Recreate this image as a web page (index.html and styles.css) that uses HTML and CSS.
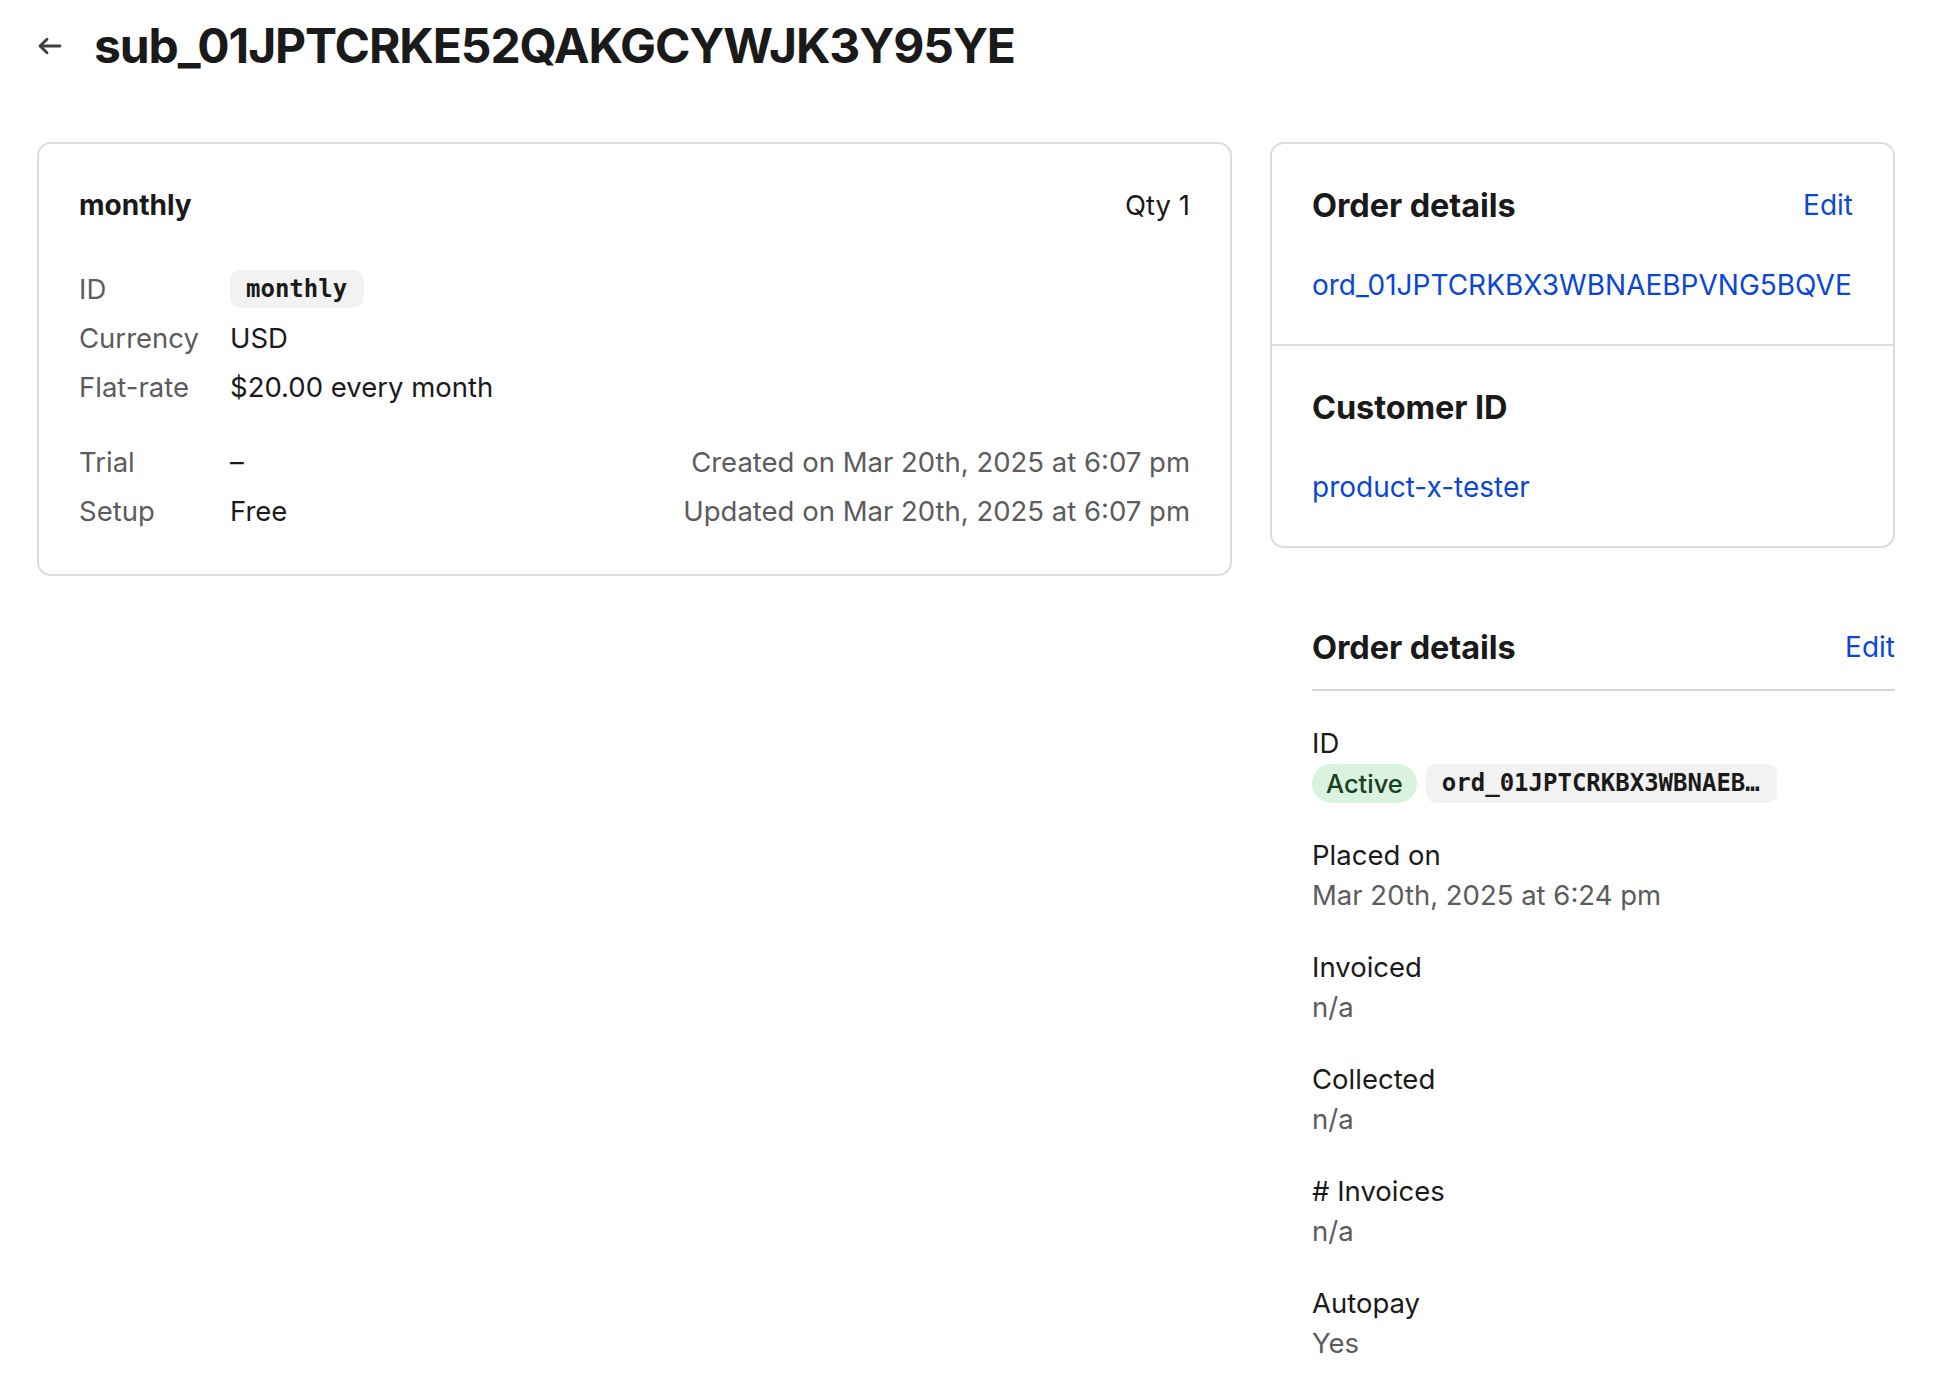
FILE: index.html
```html
<!DOCTYPE html>
<html lang="en">
<head>
<meta charset="utf-8">
<title>sub_01JPTCRKE52QAKGCYWJK3Y95YE</title>
<link rel="stylesheet" href="styles.css">
</head>
<body>
<div class="page">
  <header class="page-head">
    <a class="back" href="#" aria-label="Back">
      <svg width="26" height="18" viewBox="0 0 26 18" fill="none" stroke="#3d3d3d" stroke-width="2.8" stroke-linecap="round" stroke-linejoin="round"><path d="M23 9H3.5"/><path d="M10 2.2L3 9l7 6.8"/></svg>
    </a>
    <h1 class="title">sub_01JPTCRKE52QAKGCYWJK3Y95YE</h1>
  </header>

  <div class="layout">
    <section class="card plan">
      <div class="plan-head">
        <h2 class="plan-name">monthly</h2>
        <span class="qty">Qty 1</span>
      </div>
      <dl class="kv">
        <dt>ID</dt><dd><code class="chip">monthly</code></dd>
        <dt>Currency</dt><dd>USD</dd>
        <dt>Flat-rate</dt><dd>$20.00 every month</dd>
      </dl>
      <div class="plan-foot">
        <dl class="kv">
          <dt>Trial</dt><dd>–</dd>
          <dt>Setup</dt><dd>Free</dd>
        </dl>
        <div class="stamps">
          <div>Created on Mar 20th, 2025 at 6:07 pm</div>
          <div>Updated on Mar 20th, 2025 at 6:07 pm</div>
        </div>
      </div>
    </section>

    <aside class="side">
      <div class="card stack">
        <div class="stack-item">
          <div class="stack-head">
            <h3 class="h3">Order details</h3>
            <a class="link" href="#">Edit</a>
          </div>
          <a class="link" href="#">ord_01JPTCRKBX3WBNAEBPVNG5BQVE</a>
        </div>
        <div class="stack-item">
          <div class="stack-head">
            <h3 class="h3">Customer ID</h3>
          </div>
          <a class="link" href="#">product-x-tester</a>
        </div>
      </div>

      <div class="details">
        <div class="details-head">
          <h3 class="h3">Order details</h3>
          <a class="link" href="#">Edit</a>
        </div>
        <div class="fields">
          <div class="field">
            <div class="f-label">ID</div>
            <div class="chips">
              <span class="status">Active</span>
              <code class="chip chip-id" title="ord_01JPTCRKBX3WBNAEBPVNG5BQVE">ord_01JPTCRKBX3WBNAEB…</code>
            </div>
          </div>
          <div class="field">
            <div class="f-label">Placed on</div>
            <div class="f-value">Mar 20th, 2025 at 6:24 pm</div>
          </div>
          <div class="field">
            <div class="f-label">Invoiced</div>
            <div class="f-value">n/a</div>
          </div>
          <div class="field">
            <div class="f-label">Collected</div>
            <div class="f-value">n/a</div>
          </div>
          <div class="field">
            <div class="f-label"># Invoices</div>
            <div class="f-value">n/a</div>
          </div>
          <div class="field">
            <div class="f-label">Autopay</div>
            <div class="f-value">Yes</div>
          </div>
        </div>
      </div>
    </aside>
  </div>
</div>
</body>
</html>
```

FILE: styles.css
```css
* { box-sizing: border-box; }
html, body { margin: 0; padding: 0; background: #fff; }
body {
  font-family: Inter, "Liberation Sans", sans-serif;
  color: #1a1a1a;
  font-size: 27.5px;
  -webkit-font-smoothing: antialiased;
}
h1, h2, h3, dl, dd, dt { margin: 0; }

.page { padding: 0 55px 0 37px; }

.page-head {
  display: flex;
  align-items: center;
  height: 92px;
}
.back { display: flex; width: 57px; align-items: center; }
.title {
  font-size: 48px;
  font-weight: 700;
  letter-spacing: -1.1px;
  line-height: 1;
  color: #1a1a1a;
}

.layout {
  display: grid;
  grid-template-columns: 1fr 625px;
  column-gap: 38px;
  align-items: start;
  margin-top: 50px;
}

.card {
  border: 2px solid #dcdcdc;
  border-radius: 14px;
  background: #fff;
}

/* plan card */
.plan { padding: 39px 40px; }
.plan-head {
  display: flex;
  justify-content: space-between;
  align-items: center;
  height: 44px;
  margin-bottom: 37px;
}
.plan-name { font-size: 28px; font-weight: 700; }
.qty { font-size: 27.5px; }

.kv {
  display: grid;
  grid-template-columns: 151px auto;
  grid-auto-rows: 49px;
  align-items: center;
}
.kv dt { color: #5c5c5c; }
.kv dd { color: #1a1a1a; }

.chip {
  display: inline-flex;
  align-items: center;
  height: 38px;
  padding: 0 17px 0 16px;
  border-radius: 10px;
  background: #f2f2f2;
  font-family: "DejaVu Sans Mono", "Liberation Mono", monospace;
  font-weight: 700;
  font-size: 24px;
  color: #1a1a1a;
  white-space: nowrap;
}

.plan-foot {
  display: flex;
  justify-content: space-between;
  margin-top: 26px;
}
.stamps {
  display: grid;
  grid-auto-rows: 49px;
  align-items: center;
  text-align: right;
  color: #5c5c5c;
}

/* side */
.side { display: flex; flex-direction: column; }
.stack-item {
  padding: 39px 40px 39px 40px;
  display: flex;
  flex-direction: column;
  gap: 38px;
}
.stack-item + .stack-item { border-top: 2px solid #dcdcdc; }
.stack-head {
  display: flex;
  justify-content: space-between;
  align-items: center;
  height: 44px;
}
.h3 { font-size: 32.5px; font-weight: 700; color: #1a1a1a; letter-spacing: -0.1px; }
.link {
  color: #0a47d6;
  text-decoration: none;
  line-height: 40px;
  font-size: 28px;
}

.details { margin: 77px 0 0 42px; }
.details-head {
  display: flex;
  justify-content: space-between;
  align-items: center;
  height: 44px;
  box-sizing: content-box;
  padding-bottom: 20px;
  border-bottom: 2px solid #d6d6d6;
}
.fields {
  display: flex;
  flex-direction: column;
  gap: 32px;
  padding-top: 32px;
}
.f-label { line-height: 40px; color: #1a1a1a; }
.f-value { line-height: 40px; color: #5c5c5c; }
.chips { display: flex; gap: 9px; height: 40px; align-items: center; }
.status {
  display: inline-flex;
  align-items: center;
  height: 39px;
  padding: 0 14px;
  border-radius: 20px;
  background: #d9f3de;
  color: #17401f;
  font-size: 25.5px;
  font-weight: 500;
}
.chip-id {
  height: 39px;
  width: 351px;
}
```
